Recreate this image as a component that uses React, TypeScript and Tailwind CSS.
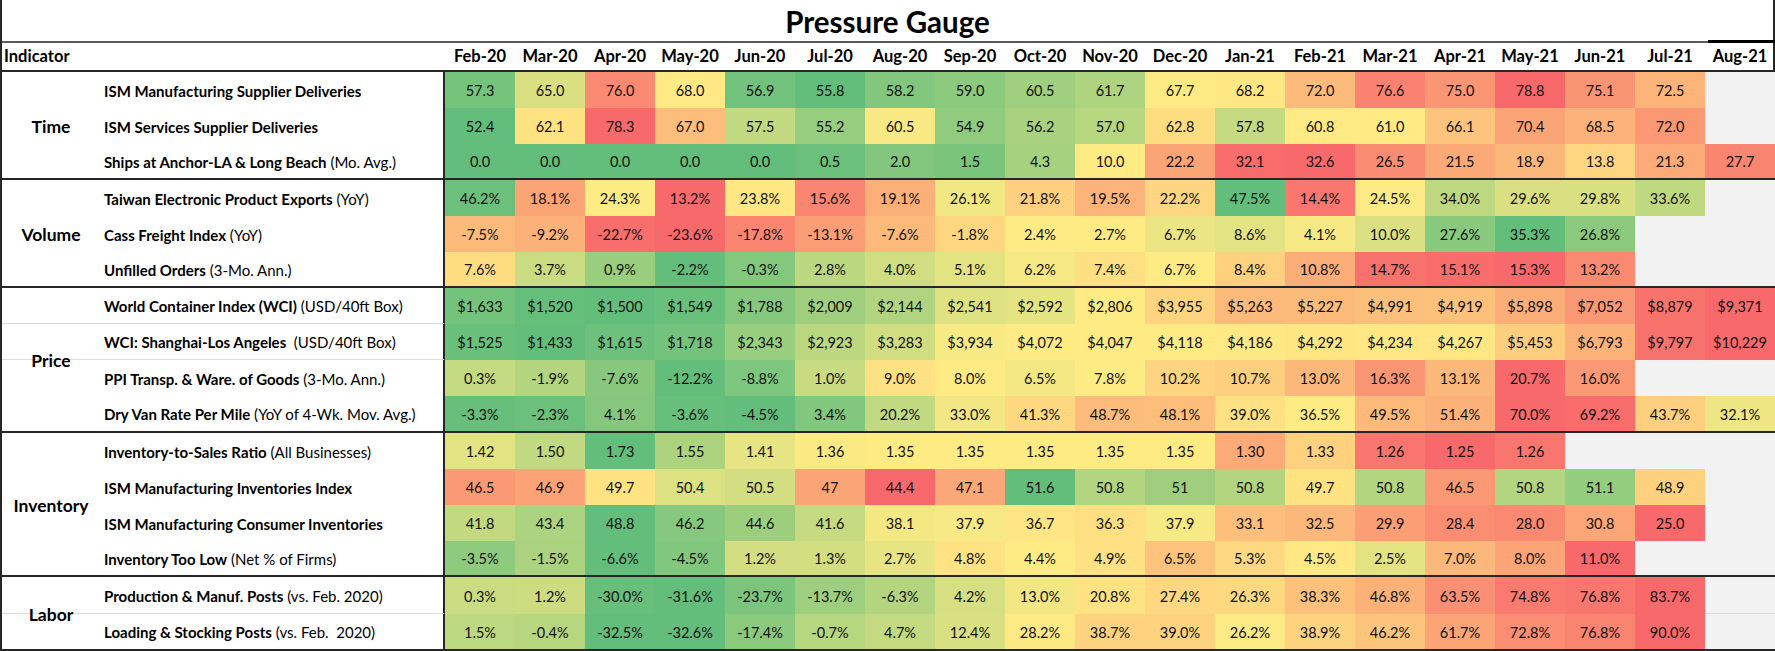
const MONTHS = [
  "Feb-20", "Mar-20", "Apr-20", "May-20", "Jun-20", "Jul-20", "Aug-20", "Sep-20", "Oct-20", "Nov-20",
  "Dec-20", "Jan-21", "Feb-21", "Mar-21", "Apr-21", "May-21", "Jun-21", "Jul-21", "Aug-21",
];

type Row = {
  name: string;
  note?: string;
  values: (string | null)[];
  reverse?: boolean;
  line?: boolean;
  tall?: boolean;
};

type Section = { title: string; rows: Row[] };

const split = (s: string) => s.split(" ").map((v) => (v === "_" ? null : v));

const SECTIONS: Section[] = [
  {
    title: "Time",
    rows: [
      {
        name: "ISM Manufacturing Supplier Deliveries",
        values: split("57.3 65.0 76.0 68.0 56.9 55.8 58.2 59.0 60.5 61.7 67.7 68.2 72.0 76.6 75.0 78.8 75.1 72.5 _"),
      },
      {
        name: "ISM Services Supplier Deliveries",
        values: split("52.4 62.1 78.3 67.0 57.5 55.2 60.5 54.9 56.2 57.0 62.8 57.8 60.8 61.0 66.1 70.4 68.5 72.0 _"),
      },
      {
        name: "Ships at Anchor-LA & Long Beach",
        note: "(Mo. Avg.)",
        values: split("0.0 0.0 0.0 0.0 0.0 0.5 2.0 1.5 4.3 10.0 22.2 32.1 32.6 26.5 21.5 18.9 13.8 21.3 27.7"),
      },
    ],
  },
  {
    title: "Volume",
    rows: [
      {
        name: "Taiwan Electronic Product Exports",
        note: "(YoY)",
        reverse: true,
        values: split("46.2% 18.1% 24.3% 13.2% 23.8% 15.6% 19.1% 26.1% 21.8% 19.5% 22.2% 47.5% 14.4% 24.5% 34.0% 29.6% 29.8% 33.6% _"),
      },
      {
        name: "Cass Freight Index",
        note: "(YoY)",
        reverse: true,
        values: split("-7.5% -9.2% -22.7% -23.6% -17.8% -13.1% -7.6% -1.8% 2.4% 2.7% 6.7% 8.6% 4.1% 10.0% 27.6% 35.3% 26.8% _ _"),
      },
      {
        name: "Unfilled Orders",
        note: "(3-Mo. Ann.)",
        values: split("7.6% 3.7% 0.9% -2.2% -0.3% 2.8% 4.0% 5.1% 6.2% 7.4% 6.7% 8.4% 10.8% 14.7% 15.1% 15.3% 13.2% _ _"),
      },
    ],
  },
  {
    title: "Price",
    rows: [
      {
        name: "World Container Index (WCI)",
        note: "(USD/40ft Box)",
        line: true,
        values: split("$1,633 $1,520 $1,500 $1,549 $1,788 $2,009 $2,144 $2,541 $2,592 $2,806 $3,955 $5,263 $5,227 $4,991 $4,919 $5,898 $7,052 $8,879 $9,371"),
      },
      {
        name: "WCI: Shanghai-Los Angeles ",
        note: " (USD/40ft Box)",
        line: true,
        values: split("$1,525 $1,433 $1,615 $1,718 $2,343 $2,923 $3,283 $3,934 $4,072 $4,047 $4,118 $4,186 $4,292 $4,234 $4,267 $5,453 $6,793 $9,797 $10,229"),
      },
      {
        name: "PPI Transp. & Ware. of Goods",
        note: "(3-Mo. Ann.)",
        values: split("0.3% -1.9% -7.6% -12.2% -8.8% 1.0% 9.0% 8.0% 6.5% 7.8% 10.2% 10.7% 13.0% 16.3% 13.1% 20.7% 16.0% _ _"),
      },
      {
        name: "Dry Van Rate Per Mile",
        note: "(YoY of 4-Wk. Mov. Avg.)",
        tall: true,
        values: split("-3.3% -2.3% 4.1% -3.6% -4.5% 3.4% 20.2% 33.0% 41.3% 48.7% 48.1% 39.0% 36.5% 49.5% 51.4% 70.0% 69.2% 43.7% 32.1%"),
      },
    ],
  },
  {
    title: "Inventory",
    rows: [
      {
        name: "Inventory-to-Sales Ratio",
        note: "(All Businesses)",
        reverse: true,
        values: split("1.42 1.50 1.73 1.55 1.41 1.36 1.35 1.35 1.35 1.35 1.35 1.30 1.33 1.26 1.25 1.26 _ _ _"),
      },
      {
        name: "ISM Manufacturing Inventories Index",
        reverse: true,
        values: split("46.5 46.9 49.7 50.4 50.5 47 44.4 47.1 51.6 50.8 51 50.8 49.7 50.8 46.5 50.8 51.1 48.9 _"),
      },
      {
        name: "ISM Manufacturing Consumer Inventories",
        reverse: true,
        values: split("41.8 43.4 48.8 46.2 44.6 41.6 38.1 37.9 36.7 36.3 37.9 33.1 32.5 29.9 28.4 28.0 30.8 25.0 _"),
      },
      {
        name: "Inventory Too Low",
        note: "(Net % of Firms)",
        values: split("-3.5% -1.5% -6.6% -4.5% 1.2% 1.3% 2.7% 4.8% 4.4% 4.9% 6.5% 5.3% 4.5% 2.5% 7.0% 8.0% 11.0% _ _"),
      },
    ],
  },
  {
    title: "Labor",
    rows: [
      {
        name: "Production & Manuf. Posts",
        note: "(vs. Feb. 2020)",
        line: true,
        tall: true,
        values: split("0.3% 1.2% -30.0% -31.6% -23.7% -13.7% -6.3% 4.2% 13.0% 20.8% 27.4% 26.3% 38.3% 46.8% 63.5% 74.8% 76.8% 83.7% _"),
      },
      {
        name: "Loading & Stocking Posts",
        note: "(vs. Feb.  2020)",
        tall: true,
        values: split("1.5% -0.4% -32.5% -32.6% -17.4% -0.7% 4.7% 12.4% 28.2% 38.7% 39.0% 26.2% 38.9% 46.2% 61.7% 72.8% 76.8% 90.0% _"),
      },
    ],
  },
];

const GREEN = [99, 190, 123];
const YELLOW = [255, 235, 132];
const RED = [248, 105, 107];

const num = (s: string) => parseFloat(s.replace(/[$,%]/g, ""));

const mix = (a: number[], b: number[], t: number) =>
  `rgb(${a.map((v, i) => Math.round(v + (b[i] - v) * t)).join(",")})`;

// excel style 3-colour scale: min / 50th percentile / max
function rowColors(row: Row) {
  const nums = row.values.filter((v): v is string => v !== null).map(num);
  const sorted = [...nums].sort((a, b) => a - b);
  const n = sorted.length;
  const mid = n % 2 ? sorted[(n - 1) / 2] : (sorted[n / 2 - 1] + sorted[n / 2]) / 2;
  const lo = sorted[0];
  const hi = sorted[n - 1];
  const low = row.reverse ? RED : GREEN;
  const high = row.reverse ? GREEN : RED;
  return row.values.map((v) => {
    if (v === null) return null;
    const x = num(v);
    if (x <= mid) return mix(low, YELLOW, mid === lo ? 1 : (x - lo) / (mid - lo));
    return mix(YELLOW, high, (x - mid) / (hi - mid));
  });
}

function DataRow({ row, last }: { row: Row; last: boolean }) {
  const colors = rowColors(row);
  return (
    <div
      className={`flex ${row.tall ? "h-[37px]" : "h-[36px]"} ${last ? "border-b-2 border-[#262626]" : ""}`}
    >
      <div
        className={`w-[443px] shrink-0 border-r-2 border-[#262626] pl-[102px] pt-[2px] flex items-center whitespace-pre text-[15px] ${
          row.line ? "border-b border-b-[#dcdcdc]" : ""
        }`}
      >
        <span className="font-bold">{row.name}</span>
        {row.note && <span>{" " + row.note.trimStart()}</span>}
      </div>
      {row.values.map((v, i) =>
        v === null ? (
          <div
            key={i}
            className={`w-[70px] shrink-0 bg-[#f2f2f2] ${row.line ? "border-b border-[#dcdcdc]" : ""}`}
          />
        ) : (
          <div
            key={i}
            className="w-[70px] shrink-0 pt-[2px] flex items-center justify-center text-[14.5px] text-[#111]"
            style={{ backgroundColor: colors[i] ?? undefined }}
          >
            {v}
          </div>
        )
      )}
    </div>
  );
}

export default function App() {
  return (
    <div className="w-[1775px] h-[651px] overflow-hidden bg-white font-['Lato',sans-serif] text-black">
      <div className="border-l-2 border-[#262626]">
        <div className="h-[41px] pt-[2px] border-r-2 border-[#262626] flex items-center justify-center text-[29.5px] font-bold leading-none">
          Pressure Gauge
        </div>
        <div className="relative h-[31px] flex items-center border-t-2 border-b-2 border-r-2 border-t-[#5a5a5a] border-b-[#262626] border-r-[#262626] text-[16.5px] font-bold">
          <div className="w-[443px] shrink-0 pl-[2px]">Indicator</div>
          {MONTHS.map((m) => (
            <div key={m} className="w-[70px] shrink-0 text-center">
              {m}
            </div>
          ))}
          <div className="absolute right-[-2px] top-[-3px] w-[67px] h-[3px] bg-black" />
        </div>
        {SECTIONS.map((s) => (
          <div key={s.title} className="relative">
            {s.rows.map((r, i) => (
              <DataRow key={r.name} row={r} last={i === s.rows.length - 1} />
            ))}
            <div className="absolute left-0 top-0 bottom-0 w-[98px] pt-[2px] flex items-center justify-center text-[17.5px] font-bold">
              {s.title}
            </div>
          </div>
        ))}
      </div>
    </div>
  );
}
